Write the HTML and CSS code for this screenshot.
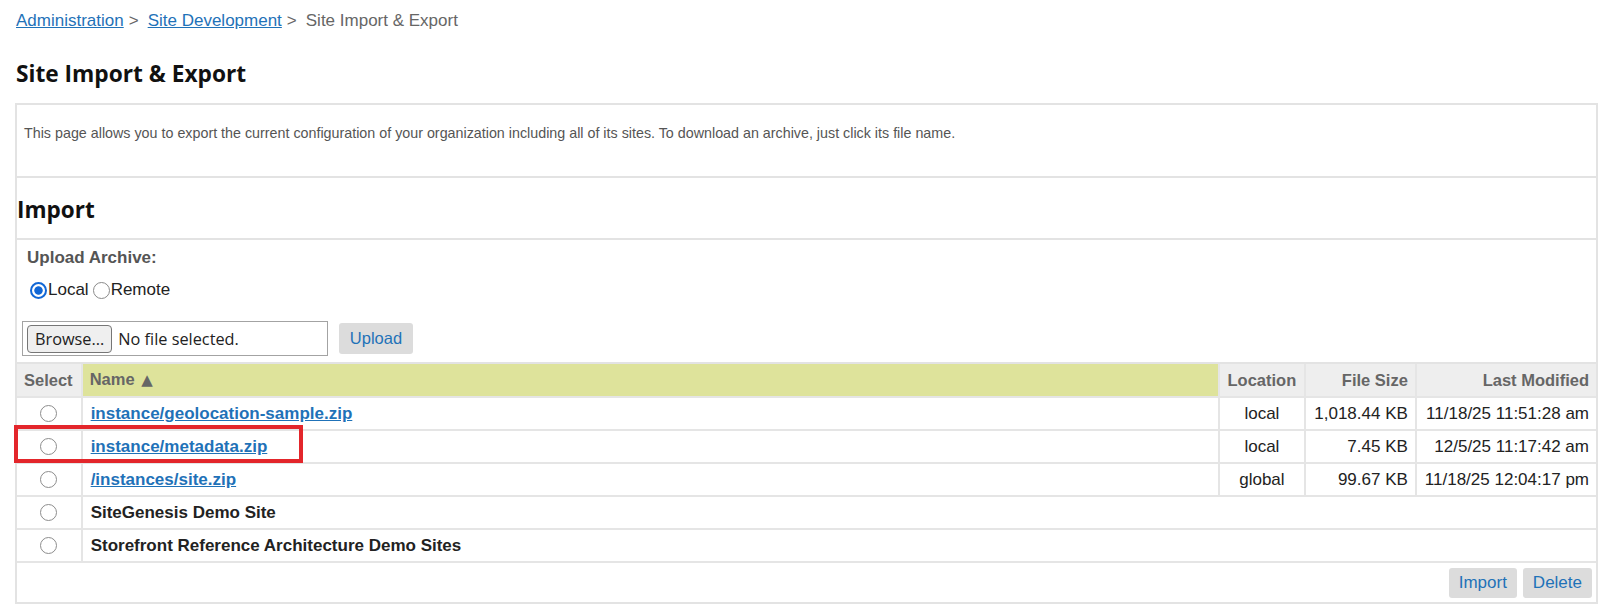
FILE: index.html
```html
<!DOCTYPE html>
<html lang="en">
<head>
<meta charset="utf-8">
<title>Site Import &amp; Export</title>
<link rel="stylesheet" href="styles.css">
</head>
<body>
<nav class="crumbs">
  <a href="#">Administration</a><span class="sep">&gt;</span><a href="#">Site Development</a><span class="sep">&gt;</span><span class="current">Site Import &amp; Export</span>
</nav>

<h1 class="page-title">Site Import &amp; Export</h1>

<div class="panel">
  <div class="intro">This page allows you to export the current configuration of your organization including all of its sites. To download an archive, just click its file name.</div>

  <div class="section-head"><h2>Import</h2></div>

  <div class="upload">
    <div class="upload-label">Upload Archive:</div>
    <div class="radios">
      <label class="radio-opt"><input type="radio" name="src" class="radio" checked>Local</label>
      <label class="radio-opt"><input type="radio" name="src" class="radio">Remote</label>
    </div>
    <div class="file-row">
      <div class="file-box">
        <span class="browse">Browse...</span>
        <span class="file-name">No file selected.</span>
      </div>
      <button class="btn">Upload</button>
    </div>
  </div>

  <table class="archives">
    <colgroup>
      <col class="c-select">
      <col>
      <col class="c-loc">
      <col class="c-size">
      <col class="c-date">
    </colgroup>
    <thead>
      <tr>
        <th class="th-select">Select</th>
        <th class="th-name">Name <span class="sort">&#9650;</span></th>
        <th class="th-loc">Location</th>
        <th class="num">File Size</th>
        <th class="num">Last Modified</th>
      </tr>
    </thead>
    <tbody>
      <tr>
        <td class="sel"><input type="radio" name="archive" class="radio"></td>
        <td><a href="#" class="file">instance/geolocation-sample.zip</a></td>
        <td class="loc">local</td>
        <td class="num">1,018.44 KB</td>
        <td class="num">11/18/25 11:51:28 am</td>
      </tr>
      <tr>
        <td class="sel"><input type="radio" name="archive" class="radio"></td>
        <td><a href="#" class="file">instance/metadata.zip</a></td>
        <td class="loc">local</td>
        <td class="num">7.45 KB</td>
        <td class="num">12/5/25 11:17:42 am</td>
      </tr>
      <tr>
        <td class="sel"><input type="radio" name="archive" class="radio"></td>
        <td><a href="#" class="file">/instances/site.zip</a></td>
        <td class="loc">global</td>
        <td class="num">99.67 KB</td>
        <td class="num">11/18/25 12:04:17 pm</td>
      </tr>
      <tr>
        <td class="sel"><input type="radio" name="archive" class="radio"></td>
        <td colspan="4" class="site">SiteGenesis Demo Site</td>
      </tr>
      <tr>
        <td class="sel"><input type="radio" name="archive" class="radio"></td>
        <td colspan="4" class="site">Storefront Reference Architecture Demo Sites</td>
      </tr>
    </tbody>
  </table>

  <div class="actions">
    <button class="btn">Import</button>
    <button class="btn">Delete</button>
  </div>
</div>

<div class="highlight"></div>
</body>
</html>
```

FILE: styles.css
```css
html, body {
  margin: 0;
  padding: 0;
  background: #fff;
}

body {
  font-family: "Liberation Sans", Arial, sans-serif;
  color: #222;
}

/* breadcrumb trail */
.crumbs {
  padding: 11px 16px 0;
  font-size: 17px;
  line-height: 20px;
  color: #666;
}

.crumbs a {
  color: #1f72b8;
  text-decoration: underline;
}

.crumbs .sep {
  margin: 0 9px 0 5px;
  color: #666;
}

.page-title {
  margin: 28px 0 0 16px;
  font-family: "Open Sans", "Noto Sans", sans-serif;
  font-size: 22.7px;
  line-height: 30px;
  font-weight: 700;
  color: #111;
}

/* main bordered panel */
.panel {
  margin: 14px 16px 0 15px;
  border: 2px solid #e3e3e3;
}

.intro {
  padding: 19px 7px 34px;
  font-size: 14.3px;
  line-height: 18px;
  color: #555;
  border-bottom: 2px solid #e3e3e3;
}

.section-head {
  padding: 16px 0 13px;
  border-bottom: 2px solid #e3e3e3;
}

.section-head h2 {
  margin: 0;
  font-family: "Open Sans", "Noto Sans", sans-serif;
  font-size: 22.5px;
  line-height: 31px;
  font-weight: 700;
  color: #111;
}

/* upload form */
.upload {
  padding: 8px 0 6px;
  border-bottom: 2px solid #e3e3e3;
}

.upload-label {
  padding-left: 10px;
  font-size: 17px;
  line-height: 20px;
  font-weight: 700;
  color: #555;
}

.radios {
  display: flex;
  gap: 4px;
  margin-top: 12px;
  padding-left: 13px;
  font-size: 17px;
  line-height: 20px;
  color: #222;
}

.radio-opt {
  display: flex;
  align-items: center;
}

.radio {
  appearance: none;
  -webkit-appearance: none;
  box-sizing: border-box;
  width: 17px;
  height: 17px;
  margin: 0 1px 0 0;
  border: 1px solid #8a8a8a;
  border-radius: 50%;
  background: #fff;
  flex: none;
}

.radio:checked {
  border: 2px solid #1167d6;
  background: radial-gradient(circle, #1167d6 0 3.8px, #fff 4.6px);
}

.file-row {
  display: flex;
  align-items: center;
  margin-top: 21px;
  padding-left: 5px;
}

.file-box {
  box-sizing: border-box;
  display: flex;
  align-items: center;
  width: 306px;
  height: 35px;
  padding-left: 4px;
  border: 1px solid #a3a3a3;
  font-family: "Open Sans", "Noto Sans", sans-serif;
  font-size: 16.3px;
  color: #222;
}

.browse {
  box-sizing: border-box;
  display: flex;
  align-items: center;
  height: 28px;
  padding: 0 7px;
  border: 1px solid #767676;
  border-radius: 4px;
  background: #efefef;
}

.file-name {
  margin-left: 6px;
}

.btn {
  box-sizing: border-box;
  height: 31px;
  padding: 0 10px;
  border: 0;
  border-radius: 3px;
  background: #dcdcdc;
  color: #1f72b8;
  font-family: "Liberation Sans", Arial, sans-serif;
  font-size: 16.5px;
}

.file-row .btn {
  margin-left: 11px;
  width: 74px;
}

/* archive list */
.archives {
  width: 100%;
  border-collapse: collapse;
  border-style: hidden;
  font-size: 16.5px;
}

.c-select { width: 63px; }
.c-loc { width: 86px; }
.c-size { width: 109px; }
.c-date { width: 180px; }

.archives th,
.archives td {
  padding: 0 8px;
  line-height: 31px;
  border: 2px solid #e5e5e5;
  white-space: nowrap;
}

.archives td {
  font-size: 17px;
}

.archives th {
  background: #eeeeee;
  color: #666;
  font-weight: 700;
  text-align: left;
}

.archives th.th-select {
  padding-left: 7px;
}

.archives th.th-name {
  background: #dee39b;
  padding-left: 7px;
}

.sort {
  margin-left: 2px;
  font-family: "DejaVu Sans", sans-serif;
  font-size: 15px;
}

.archives th.th-loc,
.archives td.loc {
  text-align: center;
}

.archives .num {
  text-align: right;
  padding-right: 7px;
}

.archives td.sel {
  text-align: center;
  vertical-align: middle;
}

.archives td.sel .radio {
  display: block;
  margin: 0 auto;
  width: 17px;
  height: 17px;
  border-color: #8d8d8d;
}

.file {
  color: #1f72b8;
  font-weight: 700;
  text-decoration: underline;
}

.site {
  font-weight: 700;
  color: #222;
}

.actions {
  display: flex;
  justify-content: flex-end;
  gap: 6px;
  padding: 5px 4px 4px;
  border-top: 2px solid #e5e5e5;
}

.actions .btn {
  height: 30px;
  font-size: 17px;
}

/* annotation frame over the metadata row */
.highlight {
  position: absolute;
  left: 14px;
  top: 425px;
  width: 281px;
  height: 30px;
  border: 4px solid #e3262b;
}
```
